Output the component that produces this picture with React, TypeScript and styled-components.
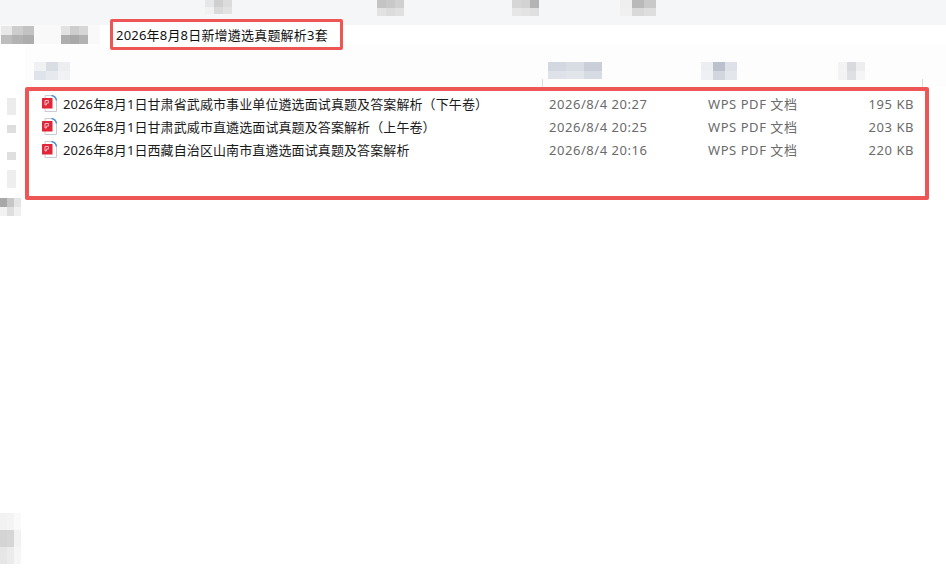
import styled, { createGlobalStyle } from "styled-components";

const GlobalStyle = createGlobalStyle`
  html, body {
    margin: 0;
    padding: 0;
    background: #ffffff;
  }

  * {
    box-sizing: border-box;
  }
`;

const Page = styled.div`
  width: 946px;
  height: 568px;
  overflow: hidden;
  display: flex;
  flex-direction: column;
  background-color: #ffffff;
  font-family: "Noto Sans", "Noto Sans CJK SC", sans-serif;
  font-size: 13px;
`;

const TopBar = styled.div`
  display: flex;
  align-items: flex-start;
  flex: 0 0 25px;
  padding-left: 205px;
  background-color: #f5f6f7;
`;

const AddressBar = styled.div`
  display: flex;
  align-items: center;
  flex: 0 0 19px;
  background: linear-gradient(to right, #f9f9f9 100px, #ffffff 100px);
`;

const Crumbs = styled.div`
  display: flex;
  align-items: center;
  width: 110px;
  gap: 27px;
  padding-left: 1px;
`;

const AddressBox = styled.div`
  display: flex;
  align-items: center;
  width: 233px;
  height: 31px;
  margin: -6px 0;
  padding-left: 3px;
  position: relative;
  border: 3px solid #ee5555;
  border-radius: 2px;
  background-color: #ffffff;
  color: #111111;
  letter-spacing: 0.2px;
  white-space: nowrap;
`;

const Body = styled.div`
  display: flex;
  flex: 1;
  min-height: 0;
`;

const Sidebar = styled.div`
  display: flex;
  flex-direction: column;
  flex: 0 0 25px;
  padding: 54px 0 4px;
`;

const NavTile = styled.div<{ $top: number; $h: number; $color: string }>`
  width: 9px;
  height: ${(p) => p.$h}px;
  margin: ${(p) => p.$top}px 0 0 7px;
  background-color: ${(p) => p.$color};
`;

const NavEdge = styled.div`
  margin-top: 10px;
`;

const NavFoot = styled.div`
  margin-top: auto;
`;

const Main = styled.div`
  display: flex;
  flex-direction: column;
  flex: 1;
`;

const ColumnHeader = styled.div`
  display: grid;
  grid-template-columns: 514px 153px 137px 1fr;
  align-items: start;
  flex: 0 0 43px;
  padding: 18px 0 0 9px;
  background-color: #fdfdfd;
  background-image: linear-gradient(#dcdcdc, #dcdcdc), linear-gradient(#dcdcdc, #dcdcdc);
  background-repeat: no-repeat;
  background-size: 1px 8px;
  background-position: 517px bottom, 897px bottom;
`;

const ListBox = styled.div`
  width: 904px;
  height: 113px;
  padding-top: 1px;
  border: 4px solid #ee5555;
  border-radius: 2px;
`;

const FileRow = styled.div`
  display: grid;
  grid-template-columns: 507px 159px 1fr auto;
  align-items: center;
  height: 23px;
  padding: 0 11px 0 13px;
  white-space: nowrap;
`;

const FileName = styled.div`
  display: flex;
  align-items: center;
  gap: 6px;
  color: #1a1a1a;
  letter-spacing: 0.1px;
`;

const Meta = styled.div`
  color: #6b6b6b;
  letter-spacing: 0.55px;
`;

const MosaicGrid = styled.div<{ $cols: number; $cell: number; $rowH: number; $gap: number }>`
  display: grid;
  grid-template-columns: repeat(${(p) => p.$cols}, ${(p) => p.$cell}px);
  grid-auto-rows: ${(p) => p.$rowH}px;
  margin-right: ${(p) => p.$gap}px;
`;

const MosaicCell = styled.div<{ $color: string }>`
  background-color: ${(p) => p.$color};
`;

type MosaicProps = {
  colors: string[][];
  cell: number;
  rowH?: number;
  gap?: number;
};

// pixelated patches that hide the blurred-out labels in the original
const Mosaic = ({ colors, cell, rowH, gap = 0 }: MosaicProps) => (
  <MosaicGrid $cols={colors[0].length} $cell={cell} $rowH={rowH ?? cell} $gap={gap}>
    {colors.flat().map((color, i) => (
      <MosaicCell key={i} $color={color} />
    ))}
  </MosaicGrid>
);

const PdfIcon = () => (
  <svg width="15" height="17" viewBox="0 0 15 17" fill="none">
    <path d="M3 .5h7.5L14.5 4.5V16.5H3z" fill="#fdfdfd" stroke="#c9ccd2" strokeWidth="1" />
    <path d="M9.5 .5c2.6 .4 4.6 2.2 5 5" stroke="#4d93d6" strokeWidth="1.6" />
    <rect x="0" y="3" width="10.5" height="10.5" rx="0.5" fill="#e2263a" />
    <path d="M3 10V5.5h3.4v2.6H4.4V10z" fill="none" stroke="#f7b9c0" strokeWidth="1" />
  </svg>
);

const files = [
  {
    name: "2026年8月1日甘肃省武威市事业单位遴选面试真题及答案解析（下午卷）",
    date: "2026/8/4 20:27",
    size: "195 KB",
  },
  {
    name: "2026年8月1日甘肃武威市直遴选面试真题及答案解析（上午卷）",
    date: "2026/8/4 20:25",
    size: "203 KB",
  },
  {
    name: "2026年8月1日西藏自治区山南市直遴选面试真题及答案解析",
    date: "2026/8/4 20:16",
    size: "220 KB",
  },
];

export default function App() {
  return (
    <Page>
      <GlobalStyle />
      <TopBar>
        <Mosaic
          cell={9}
          rowH={7}
          gap={145}
          colors={[
            ["#e6e7e8", "#cfcfd0", "#dcdcdd"],
            ["#f1f1f1", "#dadadb", "#e2e2e3"],
          ]}
        />
        <Mosaic
          cell={9}
          rowH={8}
          gap={108}
          colors={[
            ["#c4c4c5", "#c9c9ca", "#d0d0d1"],
            ["#e2e2e3", "#dcdcdd", "#e0e0e1"],
          ]}
        />
        <Mosaic
          cell={9}
          rowH={8}
          gap={81}
          colors={[
            ["#d6d6d7", "#d3d3d4", "#b4b4b5"],
            ["#e6e6e7", "#e3e3e4", "#dfdfe0"],
          ]}
        />
        <Mosaic
          cell={12}
          rowH={8}
          colors={[
            ["#efeff0", "#b9b9ba", "#c9c9ca"],
            ["#f0f0f1", "#d9d9da", "#dedede"],
          ]}
        />
      </TopBar>
      <AddressBar>
        <Crumbs>
          <Mosaic
            cell={11}
            rowH={9}
            colors={[
              ["#e8e8e8", "#cdcdcd", "#c2c2c2"],
              ["#bdbdbd", "#b3b3b3", "#adadad"],
            ]}
          />
          <Mosaic
            cell={9}
            rowH={9}
            colors={[
              ["#e2e2e2", "#cdcdcd", "#d6d6d6"],
              ["#aeaeae", "#a9a9a9", "#b2b2b2"],
            ]}
          />
        </Crumbs>
        <AddressBox>2026年8月8日新增遴选真题解析3套</AddressBox>
      </AddressBar>
      <Body>
        <Sidebar>
          <NavTile $top={0} $h={17} $color="#ececec" />
          <NavTile $top={10} $h={8} $color="#dedede" />
          <NavTile $top={19} $h={8} $color="#dfdfdf" />
          <NavTile $top={10} $h={18} $color="#eeeeee" />
          <NavEdge>
            <Mosaic
              cell={7}
              rowH={9}
              colors={[
                ["#a8a8a8", "#c6c6c6", "#e4e4e4"],
                ["#f2f2f2", "#dedede", "#f0f0f0"],
              ]}
            />
          </NavEdge>
          <NavFoot>
            <Mosaic
              cell={7}
              rowH={17}
              colors={[
                ["#f2f2f2", "#f4f4f4", "#fafafa"],
                ["#d4d4d4", "#d6d6d6", "#f2f2f2"],
                ["#e6e6e6", "#ebebeb", "#f6f6f6"],
              ]}
            />
          </NavFoot>
        </Sidebar>
        <Main>
          <ColumnHeader>
            <Mosaic
              cell={12}
              rowH={9}
              colors={[
                ["#f0f1f3", "#d9dde4", "#eceef1"],
                ["#dfe4ea", "#e6e9ee", "#f1f2f4"],
              ]}
            />
            <Mosaic
              cell={18}
              rowH={8.5}
              colors={[
                ["#d3d7df", "#d8dce3", "#c9ced8"],
                ["#dfe2e8", "#e2e5ea", "#d7dbe3"],
              ]}
            />
            <Mosaic
              cell={12}
              rowH={9}
              colors={[
                ["#eceef1", "#bcc2cd", "#dee1e7"],
                ["#eef0f3", "#d2d7df", "#e3e6eb"],
              ]}
            />
            <Mosaic
              cell={9}
              rowH={9}
              colors={[
                ["#f3f3f4", "#d9dade", "#eeeeef"],
                ["#f3f3f4", "#dfe0e3", "#f5f5f6"],
              ]}
            />
          </ColumnHeader>
          <ListBox>
            {files.map((file) => (
              <FileRow key={file.name}>
                <FileName>
                  <PdfIcon />
                  {file.name}
                </FileName>
                <Meta>{file.date}</Meta>
                <Meta>WPS PDF 文档</Meta>
                <Meta>{file.size}</Meta>
              </FileRow>
            ))}
          </ListBox>
        </Main>
      </Body>
    </Page>
  );
}
